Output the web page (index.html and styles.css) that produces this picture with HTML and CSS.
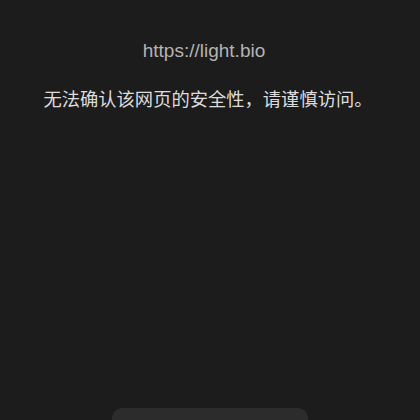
FILE: index.html
```html
<!DOCTYPE html>
<html>
  <head>
    <title>light.bio</title>
    <meta content="width=device-width,initial-scale=1" name="viewport">
    <link rel="stylesheet" href="styles.css">
  </head>
<body>
  <main class="warning">
    <p class="warning-url">https://light.bio</p>
    <p class="warning-text">无法确认该网页的安全性，请谨慎访问。</p>
  </main>

  <footer class="sheet">
    <div class="sheet-card"></div>
  </footer>
</body>
</html>
```

FILE: styles.css
```css
html,
body {
  height: 100%;
}

body {
  margin: 0;
  background: #1c1c1c;
  font-family: "Liberation Sans", "Noto Sans CJK SC", sans-serif;
  display: flex;
  flex-direction: column;
  overflow: hidden;
}

.warning {
  flex: 1;
  padding-top: 39px;
  text-align: center;
}

.warning p {
  margin: 0;
}

.warning-url {
  padding-right: 12px;
  font-size: 19px;
  line-height: 24px;
  color: #b4b4b4;
}

.warning .warning-text {
  margin-top: 21px;
  padding-right: 4px;
  font-size: 18.3px;
  line-height: 28px;
  color: #dcdcdc;
  font-family: "Noto Sans CJK SC", sans-serif;
}

.sheet {
  display: flex;
  justify-content: center;
  height: 12px;
  overflow: hidden;
}

.sheet-card {
  flex: none;
  width: 196px;
  height: 40px;
  background: #2c2c2c;
  border-radius: 10px;
}
```
